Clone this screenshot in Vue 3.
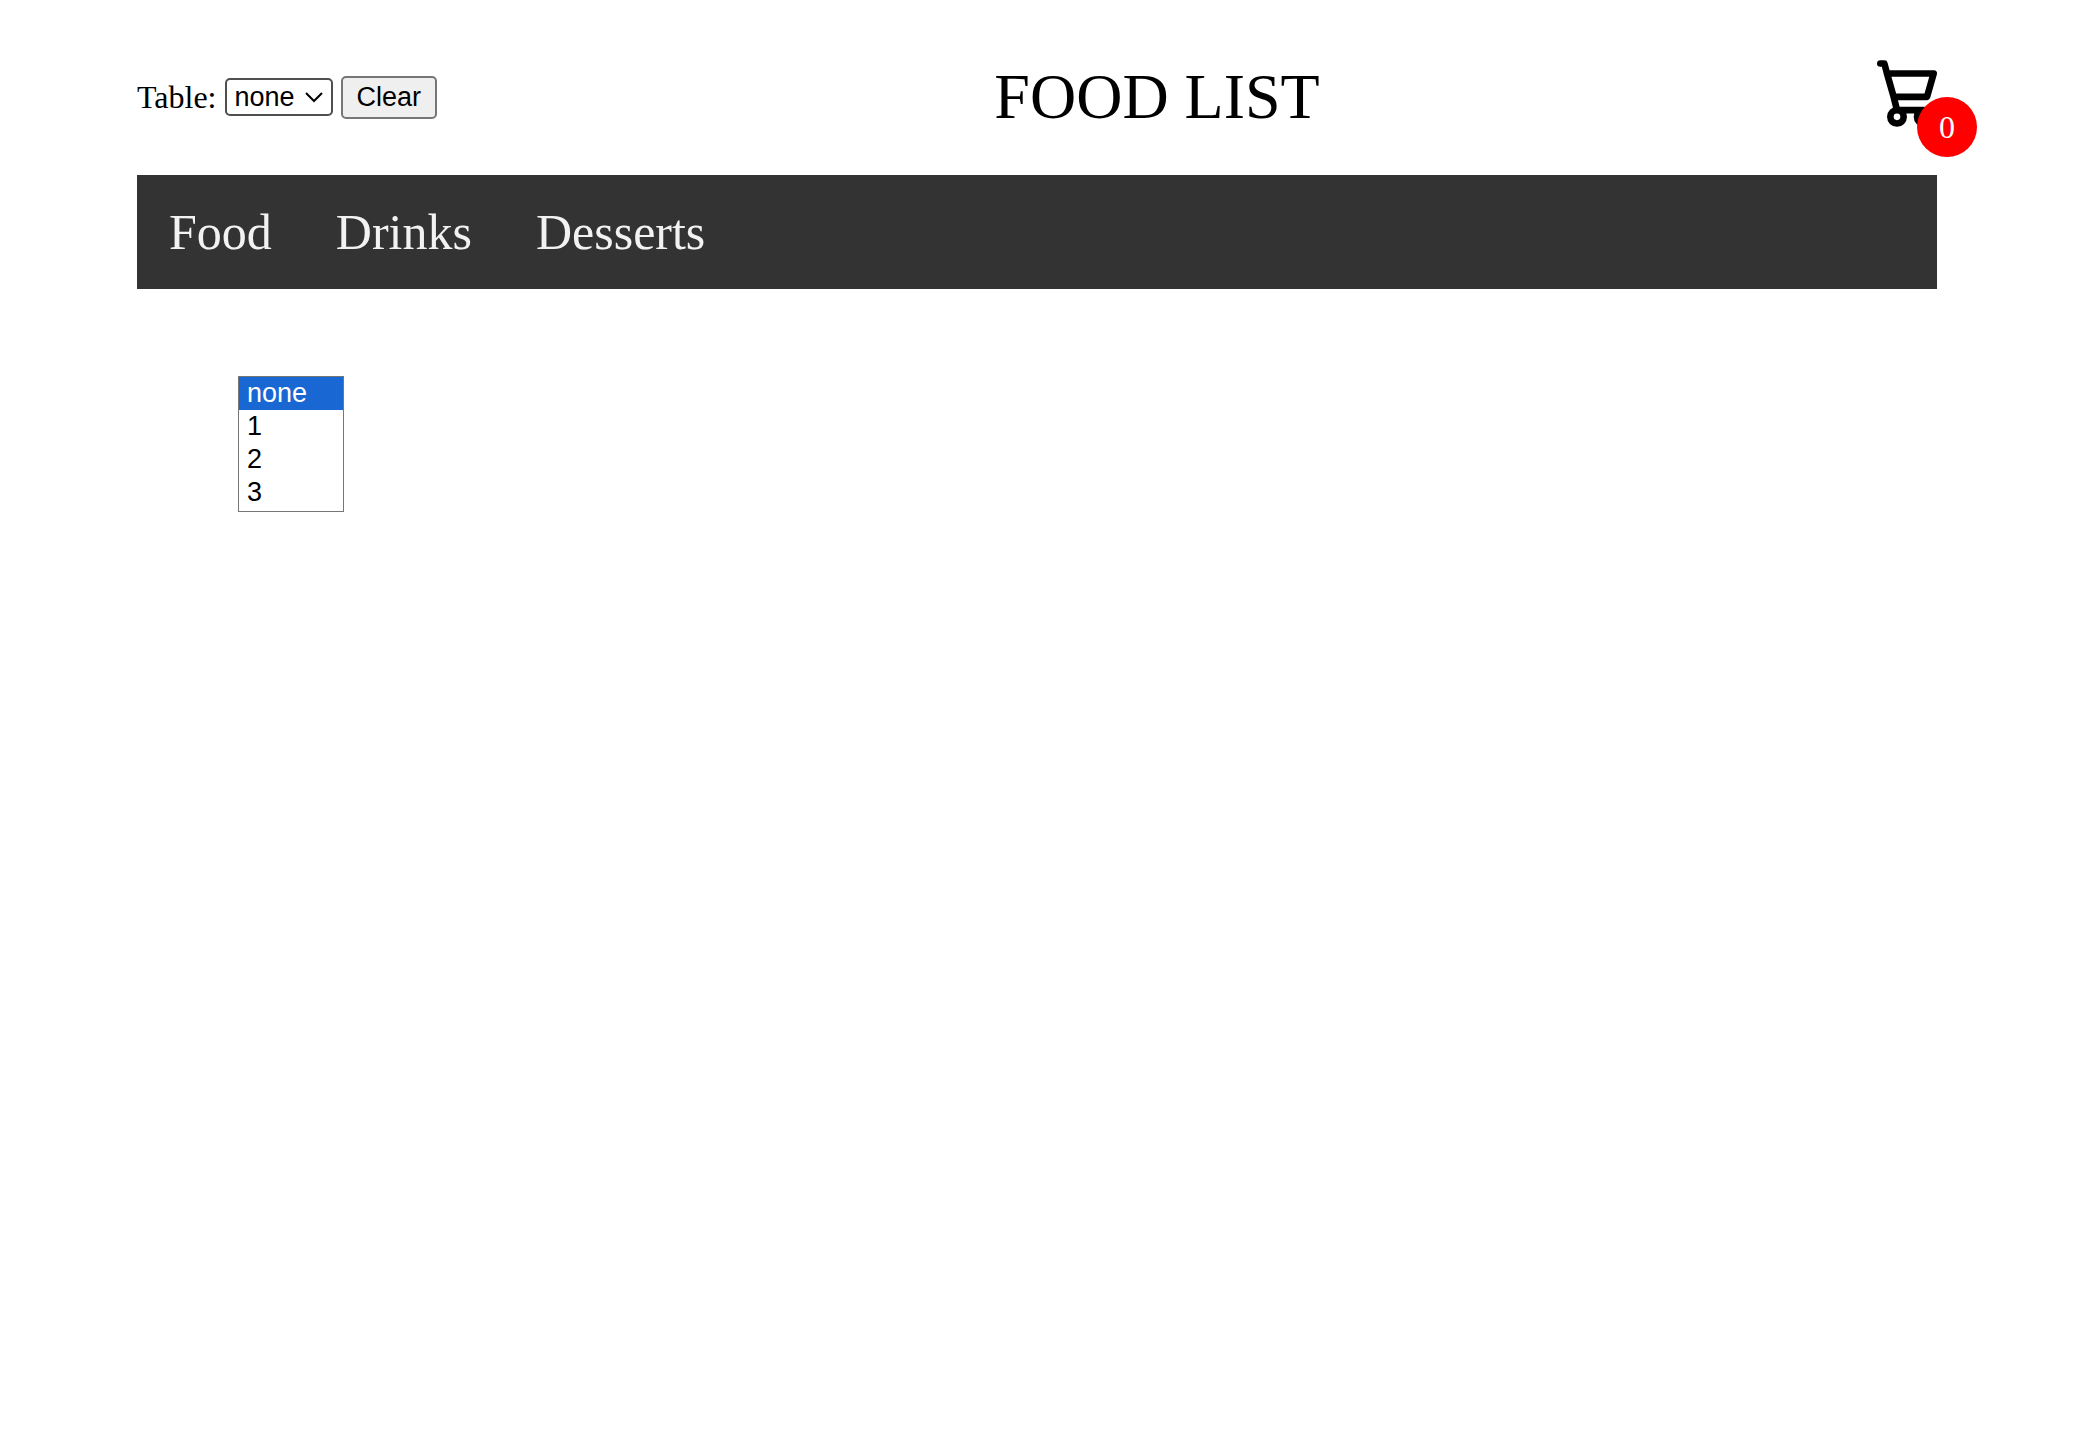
<script setup>
import { ref } from 'vue'

const tables = ['none', '1', '2', '3']
const categories = ['Food', 'Drinks', 'Desserts']
const table = ref('none')
const cartCount = ref(0)
</script>

<template>
  <div class="container">
    <header class="header">
      <div class="table-picker">
        <label for="table">Table:</label>
        <span class="select-wrap">
          <select id="table" v-model="table" class="select">
            <option v-for="t in tables" :key="t" :value="t">{{ t }}</option>
          </select>
          <svg class="chevron" viewBox="0 0 18 12" aria-hidden="true">
            <path d="M1 2l8 8 8-8" fill="none" stroke="#000" stroke-width="2" />
          </svg>
        </span>
        <button type="button" class="clear" @click="table = 'none'">Clear</button>
      </div>
      <h1 class="title">FOOD LIST</h1>
      <button type="button" class="cart" aria-label="Cart">
        <svg class="cart-icon" viewBox="0 0 18 20" fill="none" aria-hidden="true">
          <path
            stroke="#000"
            stroke-linecap="round"
            stroke-linejoin="round"
            stroke-width="2"
            d="M6 15a2 2 0 1 0 0 4 2 2 0 0 0 0-4Zm0 0h8m-8 0-1-4m9 4a2 2 0 1 0 0 4 2 2 0 0 0 0-4Zm-9-4h10l2-7H3m2 7L3 4m0 0-.792-3H1"
          />
        </svg>
        <span class="badge">{{ cartCount }}</span>
      </button>
    </header>

    <nav class="nav">
      <a v-for="c in categories" :key="c" href="#" class="nav-link">{{ c }}</a>
    </nav>

    <main class="content">
      <ul class="options" role="listbox" aria-label="Table">
        <li
          v-for="t in tables"
          :key="t"
          class="option"
          :class="{ selected: t === table }"
          role="option"
          :aria-selected="t === table"
          @click="table = t"
        >
          {{ t }}
        </li>
      </ul>
    </main>
  </div>
</template>

<style>
body {
  background: #fff;
}
</style>

<style scoped>
.container {
  max-width: 1800px;
  margin: 0 auto;
  font-family: 'Liberation Serif', 'Times New Roman', serif;
  font-size: 32px;
  color: #000;
}

.header {
  display: flex;
  justify-content: space-between;
  align-items: center;
  padding: 60px 0 41px;
}

.table-picker {
  display: flex;
  align-items: center;
  gap: 8px;
}

.select-wrap {
  position: relative;
  display: flex;
}

.select,
.clear {
  box-sizing: border-box;
  margin: 0;
  font-family: 'Liberation Sans', Arial, sans-serif;
  font-size: 27px;
  color: #000;
}

.select {
  appearance: none;
  width: 108px;
  height: 38px;
  padding: 0 8px;
  border: 2px solid #4f4f4f;
  border-radius: 5px;
  background: #fff;
}

.chevron {
  position: absolute;
  top: 13px;
  right: 10px;
  width: 18px;
  height: 12px;
  pointer-events: none;
}

.clear {
  height: 43px;
  padding: 0 14px;
  border: 2px solid #767676;
  border-radius: 5px;
  background: #efefef;
}

.title {
  margin: 0;
  font-size: 64px;
  font-weight: 400;
  line-height: 74px;
}

.cart {
  position: relative;
  width: 60px;
  height: 74px;
  padding: 0;
  border: 0;
  background: none;
  font: inherit;
}

.cart-icon {
  position: absolute;
  top: 0;
  left: 0;
  width: 60px;
  height: 67px;
}

.badge {
  position: absolute;
  top: 37px;
  left: 40px;
  display: flex;
  align-items: center;
  justify-content: center;
  width: 60px;
  height: 60px;
  border-radius: 50%;
  background: #f00;
  color: #fff;
}

.nav {
  display: flex;
  background: #333;
}

.nav-link {
  padding: 28px 32px;
  font-size: 50px;
  line-height: 58px;
  color: #f2f2f2;
  text-decoration: none;
}

.content {
  padding: 87px 101px;
}

.options {
  box-sizing: border-box;
  width: 106px;
  margin: 0;
  padding: 0 0 2px;
  border: 1px solid #767676;
  list-style: none;
  font-family: 'Liberation Sans', Arial, sans-serif;
  font-size: 27px;
  line-height: 33px;
}

.option {
  padding: 0 8px;
}

.option.selected {
  background: #1967d2;
  color: #fff;
}
</style>
